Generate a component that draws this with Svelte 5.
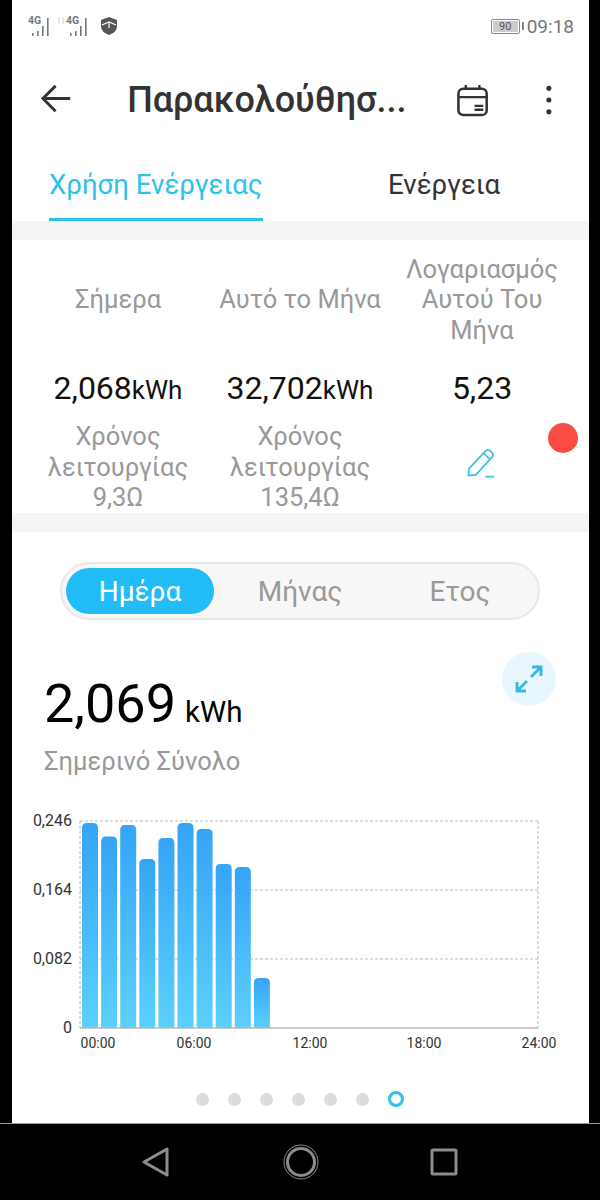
<script>
  const stats = [
    { label: 'Σήμερα', value: '2,068', unit: 'kWh', time: ['Χρόνος', 'λειτουργίας', '9,3Ω'] },
    { label: 'Αυτό το Μήνα', value: '32,702', unit: 'kWh', time: ['Χρόνος', 'λειτουργίας', '135,4Ω'] },
    { label: 'Λογαριασμός Αυτού Του Μήνα', value: '5,23', unit: '', time: null }
  ];
  const tops = [823, 836.5, 825, 859, 838, 823, 829, 864, 867, 978];
  const yTicks = [['0,246', 821], ['0,164', 890], ['0,082', 959], ['0', 1028]];
  const xTicks = [['00:00', 98], ['06:00', 194], ['12:00', 310], ['18:00', 424], ['24:00', 539]];
  const dots = [0, 1, 2, 3, 4, 5];
  // chart svg starts at y=800 on the page, x=12
  const ox = 12;
  const oy = 800;
</script>

<div class="phone">
  <div class="screen">
    <div class="status">
      <div class="status-left">
        <svg class="signal" width="24" height="24" viewBox="0 0 24 24">
          <text x="1" y="10" class="net">4G</text>
          <g fill="#777"><rect x="5" y="19" width="1.600" height="3" /><rect x="10" y="17" width="1.600" height="5" /><rect x="15" y="12" width="1.600" height="10" /><rect x="20" y="4" width="1.600" height="18" /></g>
        </svg>
        <svg class="signal" width="30" height="24" viewBox="0 0 30 24">
          <path d="M2 3v7M6 3v7" stroke="#ccc" stroke-width="1" />
          <text x="9" y="10" class="net">4G</text>
          <g fill="#777"><rect x="13" y="19" width="1.600" height="3" /><rect x="18" y="17" width="1.600" height="5" /><rect x="23" y="12" width="1.600" height="10" /><rect x="28" y="4" width="1.600" height="18" /></g>
        </svg>
        <svg class="shield" width="18" height="20" viewBox="0 0 18 20">
          <path d="M9 1l8 3v6c0 4.500-3.500 7.500-8 9-4.500-1.500-8-4.500-8-9V4z" fill="#555" />
          <path d="M2 9l7-3 7 3M9 6v6" stroke="#fff" stroke-width="1.200" fill="none" />
        </svg>
      </div>
      <div class="status-right">
        <div class="battery"><span class="level">90</span></div>
        <span class="cap"></span>
        <span class="clock">09:18</span>
      </div>
    </div>

    <header class="bar">
      <svg class="back" width="34" height="34" viewBox="0 0 34 34">
        <path d="M31 15.500H3M16 2.500L3 15.500l13 13" fill="none" stroke="#333" stroke-width="3" />
      </svg>
      <h1>Παρακολούθησ...</h1>
      <svg class="cal" width="34" height="36" viewBox="0 0 34 36">
        <rect x="2.500" y="6.500" width="29" height="27" rx="5" fill="none" stroke="#333" stroke-width="2.600" />
        <path d="M2.500 15h29M10 2.500v5M24 2.500v5M19 24h9M19 28h9" fill="none" stroke="#333" stroke-width="2.400" />
      </svg>
      <svg class="more" width="10" height="32" viewBox="0 0 10 32">
        <circle cx="5" cy="4" r="2.600" fill="#333" /><circle cx="5" cy="16" r="2.600" fill="#333" /><circle cx="5" cy="28" r="2.600" fill="#333" />
      </svg>
    </header>

    <nav class="tabs">
      <div class="tab active">Χρήση Ενέργειας</div>
      <div class="tab">Ενέργεια</div>
    </nav>

    <section class="stats">
      <div class="stat-grid">
        {#each stats as s}
          <div class="label">{s.label}</div>
        {/each}
        {#each stats as s}
          <div class="value">{s.value}{#if s.unit}<small>{s.unit}</small>{/if}</div>
        {/each}
        {#each stats as s}
          {#if s.time}
            <div class="time">{#each s.time as line}<div>{line}</div>{/each}</div>
          {:else}
            <div class="edit">
              <svg width="34" height="34" viewBox="0 0 30 30" fill="none" stroke="#3dbfe0" stroke-width="1.500">
                <path d="M3 26l.5-6L18 4.500a3 3 0 0 1 4.200-.2l1.500 1.300a3 3 0 0 1 .2 4.200L9.500 25.500z" />
                <path d="M16.500 6.500l5.500 5M18 27h8" />
              </svg>
            </div>
          {/if}
        {/each}
      </div>
      <span class="float-dot"></span>
    </section>

    <section class="detail">
      <div class="segment">
        <div class="seg on">Ημέρα</div>
        <div class="seg">Μήνας</div>
        <div class="seg">Ετος</div>
      </div>

      <div class="total-row">
        <div class="total"><b>2,069</b><span>kWh</span></div>
        <div class="expand">
          <svg width="30" height="30" viewBox="0 0 30 30" fill="none" stroke="#35b9e3" stroke-width="2.800">
            <path d="M17 13L27 3M18 3h9v9M13 17L3 27M3 18v9h9" />
          </svg>
        </div>
      </div>
      <div class="total-label">Σημερινό Σύνολο</div>

      <svg class="chart" width="577" height="262" viewBox="0 0 577 262">
        <defs>
          <linearGradient id="barFill" x1="0" y1="0" x2="0" y2="1">
            <stop offset="0" stop-color="#35a4f6" />
            <stop offset="1" stop-color="#5cd0fd" />
          </linearGradient>
        </defs>
        <path d="M{80 - ox} {821 - oy}V{1028 - oy}M{538 - ox} {821 - oy}V{1028 - oy}" class="grid" />
        {#each yTicks as t}
          <line x1={80 - ox} x2={538 - ox} y1={t[1] - oy} y2={t[1] - oy} class={t[0] === '0' ? 'base' : 'grid'} />
          <text x={72 - ox} y={t[1] - oy + 5} text-anchor="end" class="tick">{t[0]}</text>
        {/each}
        {#each tops as top, i}
          <path
            d="M{82 - ox + i * 19.100} {1028 - oy}V{top - oy + 5}q0-5 5-5h6q5 0 5 5V{1028 - oy}z"
            fill="url(#barFill)"
          />
        {/each}
        {#each xTicks as t}
          <text x={t[1] - ox} y={1048 - oy} text-anchor="middle" class="tick small">{t[0]}</text>
        {/each}
      </svg>

      <div class="dots">
        {#each dots as d}
          <span class="dot"></span>
        {/each}
        <span class="dot current"></span>
      </div>
    </section>
  </div>

  <footer class="nav">
    <svg class="tri" width="28" height="30" viewBox="0 0 28 30" fill="none" stroke="#8c8c8c" stroke-width="3" stroke-linejoin="round">
      <path d="M23 2v26L0 15z" />
    </svg>
    <svg width="36" height="36" viewBox="0 0 36 36" fill="none" stroke="#8c8c8c">
      <circle cx="18" cy="18" r="13.500" stroke-width="3" />
      <circle cx="18" cy="18" r="17" stroke-width="1" />
    </svg>
    <svg width="28" height="28" viewBox="0 0 28 28" fill="none" stroke="#8c8c8c" stroke-width="3" stroke-linejoin="round">
      <rect x="2" y="2" width="24" height="24" rx="1" />
    </svg>
  </footer>
</div>

<style>
  :global(body) {
    margin: 0;
    background: #000;
  }
  .phone {
    width: 600px;
    height: 1200px;
    background: #000;
    font-family: Roboto, "Noto Sans", sans-serif;
    display: flex;
    flex-direction: column;
    overflow: hidden;
  }
  .screen {
    margin: 0 11px 0 12px;
    height: 1123px;
    background: #fff;
    display: flex;
    flex-direction: column;
  }
  .status {
    height: 52px;
    display: flex;
    justify-content: space-between;
    align-items: center;
    padding: 0 15px 0 15px;
  }
  .status-left {
    display: flex;
    align-items: center;
    gap: 6px;
  }
  .net {
    font-size: 10.500px;
    font-weight: 700;
    fill: #777;
  }
  .shield {
    margin-left: 7px;
  }
  .status-right {
    display: flex;
    align-items: center;
  }
  .battery {
    width: 29px;
    height: 15px;
    border: 1px solid #888;
    border-radius: 2px;
    padding: 1px;
    box-sizing: border-box;
    display: flex;
  }
  .level {
    flex: 1;
    background: #ccc;
    font-size: 11px;
    line-height: 11px;
    color: #555;
    text-align: center;
  }
  .cap {
    width: 2px;
    height: 8px;
    margin-left: 2px;
    background: #888;
  }
  .clock {
    margin-left: 3px;
    font-size: 19px;
    color: #777;
  }
  .bar {
    height: 96px;
    display: flex;
    align-items: center;
    padding: 0 35px 0 28px;
  }
  .bar h1 {
    margin: 0 0 0 54px;
    width: 329px;
    flex: none;
    font-size: 36px;
    font-weight: 500;
    color: #333;
    white-space: nowrap;
  }
  .more {
    margin-left: 55px;
  }
  .tabs {
    height: 73px;
    display: flex;
    padding-left: 37px;
  }
  .tab {
    font-size: 27.600px;
    color: #333;
    padding-top: 20px;
    box-sizing: border-box;
    white-space: nowrap;
  }
  .tab.active {
    width: 214px;
    color: #2cc3e8;
    border-bottom: 3px solid #2cc3e8;
  }
  .tab:not(.active) {
    margin-left: 125px;
  }
  .stats {
    position: relative;
    border-top: 19px solid #f5f5f5;
    border-bottom: 19px solid #f5f5f5;
    height: 273px;
  }
  .stat-grid {
    display: grid;
    grid-template-columns: repeat(3, 182px);
    grid-template-rows: 117px 50px auto;
    padding-left: 15px;
    padding-top: 14px;
    text-align: center;
    font-size: 25.500px;
    line-height: 30.500px;
    color: #999;
  }
  .label {
    display: flex;
    align-items: center;
    justify-content: center;
    height: 91px;
  }
  .value {
    font-size: 32px;
    color: #111;
    line-height: 36px;
    margin-top: -1px;
  }
  .value small {
    font-size: 26px;
  }
  .edit {
    padding-top: 25px;
  }
  .float-dot {
    position: absolute;
    right: 11px;
    top: 183px;
    width: 30px;
    height: 30px;
    border-radius: 50%;
    background: #fb4c43;
  }
  .detail {
    flex: 1;
    padding-top: 30px;
  }
  .segment {
    margin-left: 48px;
    width: 480px;
    height: 58px;
    box-sizing: border-box;
    border: 2px solid #e9e9e9;
    border-radius: 29px;
    background: #f7f7f7;
    padding: 4px;
    display: grid;
    grid-template-columns: 148px 1fr 1fr;
    font-size: 28px;
    color: #999;
    text-align: center;
    line-height: 47px;
  }
  .seg {
    height: 46px;
  }
  .seg:nth-child(2),
  .seg:nth-child(3) {
    padding-left: 12px;
  }
  .seg.on {
    background: #22bcf9;
    color: #fff;
    border-radius: 23px;
  }
  .total-row {
    display: flex;
    justify-content: space-between;
    padding: 32px 33px 0 32px;
    height: 85px;
  }
  .total {
    color: #000;
    line-height: 60px;
    padding-top: 22px;
    white-space: nowrap;
  }
  .total b {
    font-size: 54px;
    font-weight: 400;
  }
  .total span {
    font-size: 29.500px;
    margin-left: 9px;
  }
  .expand {
    width: 54px;
    height: 54px;
    border-radius: 50%;
    background: #e8f7fe;
    display: flex;
    align-items: center;
    justify-content: center;
  }
  .total-label {
    margin: 9px 0 0 32px;
    font-size: 25.500px;
    line-height: 30px;
    color: #999;
  }
  .chart {
    display: block;
    margin-top: 24px;
  }
  .grid {
    stroke: #bbb;
    stroke-width: 1;
    stroke-dasharray: 3 2;
    fill: none;
  }
  .base {
    stroke: #999;
    stroke-width: 1;
  }
  .tick {
    font-size: 16px;
    fill: #333;
  }
  .tick.small {
    font-size: 14px;
  }
  .dots {
    display: flex;
    justify-content: center;
    gap: 19px;
    align-items: center;
    margin-top: 29px;
    padding-right: 2px;
  }
  .dot {
    width: 13px;
    height: 13px;
    border-radius: 50%;
    background: #dcdcdc;
  }
  .dot.current {
    width: 16px;
    height: 16px;
    box-sizing: border-box;
    background: #fff;
    border: 3px solid #2cc3e8;
  }
  .nav {
    flex: 1;
    display: flex;
    justify-content: center;
    align-items: center;
    gap: 111px;
    border-top: 1px solid #999;
    padding-left: 1px;
  }
  .tri {
    overflow: visible;
  }
</style>
